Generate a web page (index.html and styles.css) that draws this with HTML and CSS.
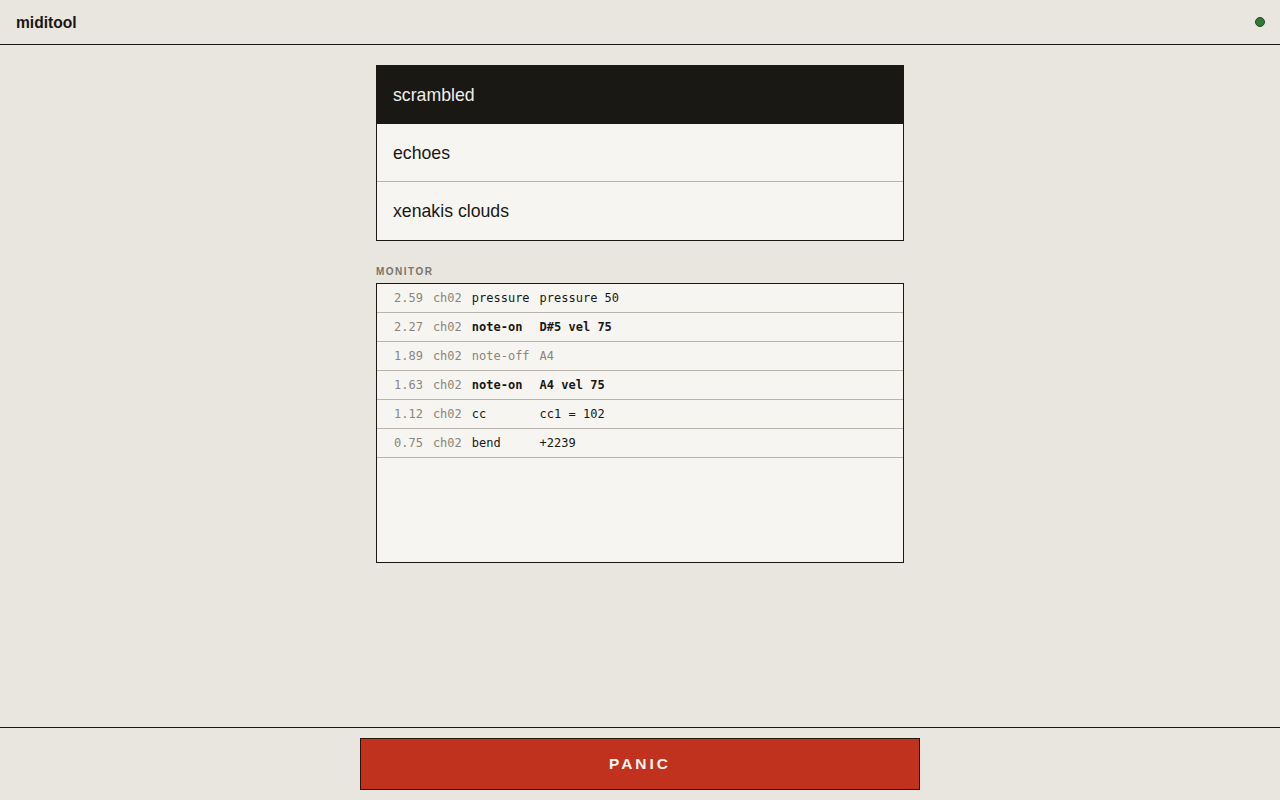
FILE: index.html
```html
<!DOCTYPE html>
<html lang="en">
<head>
    <meta charset="UTF-8">
    <meta name="viewport" content="width=device-width, initial-scale=1.0">
    <title>miditool</title>
    <link rel="stylesheet" href="styles.css">
</head>
<body>
    <header class="topbar">
        <span class="brand">miditool</span>
        <span class="status-dot" title="connected"></span>
    </header>

    <main class="main">
        <div class="panel">
            <ul class="patches">
                <li class="patch active">scrambled</li>
                <li class="patch">echoes</li>
                <li class="patch">xenakis clouds</li>
            </ul>

            <div class="section-label">MONITOR</div>
            <div class="monitor">
                <div class="event">
                    <span class="t">2.59</span><span class="ch">ch02</span><span class="kind">pressure</span><span class="data">pressure 50</span>
                </div>
                <div class="event strong">
                    <span class="t">2.27</span><span class="ch">ch02</span><span class="kind">note-on</span><span class="data">D#5 vel 75</span>
                </div>
                <div class="event muted">
                    <span class="t">1.89</span><span class="ch">ch02</span><span class="kind">note-off</span><span class="data">A4</span>
                </div>
                <div class="event strong">
                    <span class="t">1.63</span><span class="ch">ch02</span><span class="kind">note-on</span><span class="data">A4 vel 75</span>
                </div>
                <div class="event">
                    <span class="t">1.12</span><span class="ch">ch02</span><span class="kind">cc</span><span class="data">cc1 = 102</span>
                </div>
                <div class="event">
                    <span class="t">0.75</span><span class="ch">ch02</span><span class="kind">bend</span><span class="data">+2239</span>
                </div>
            </div>
        </div>
    </main>

    <footer class="bottombar">
        <button class="panic-btn">PANIC</button>
    </footer>
</body>
</html>
```

FILE: styles.css
```css
* {
    box-sizing: border-box;
}

html, body {
    height: 100%;
}

body {
    margin: 0;
    font-family: 'Liberation Sans', Arial, sans-serif;
    background: #e9e6e0;
    color: #1a1814;
    display: flex;
    flex-direction: column;
}

.topbar {
    height: 45px;
    padding: 0 16px;
    border-bottom: 1px solid #1a1814;
    display: flex;
    align-items: center;
    justify-content: space-between;
    flex-shrink: 0;
}

.brand {
    font-size: 15.6px;
    font-weight: 700;
    padding-top: 1px;
}

.status-dot {
    width: 10px;
    height: 10px;
    border-radius: 50%;
    background: #2f7a36;
    border: 1px solid #1c4a20;
    margin-right: -1px;
}

.main {
    flex: 1;
    display: flex;
    justify-content: center;
    padding-top: 20px;
}

.panel {
    width: 528px;
}

.patches {
    list-style: none;
    margin: 0;
    padding: 0;
    border: 1px solid #1a1814;
    background: #f6f5f1;
}

.patch {
    height: 58px;
    padding: 1px 16px 0;
    display: flex;
    align-items: center;
    font-size: 17.7px;
    border-bottom: 1px solid #b8b4ad;
}

.patch:last-child {
    border-bottom: none;
}

.patch.active {
    background: #1a1814;
    border-bottom-color: #1a1814;
    color: #f1eee8;
}

.section-label {
    margin: 25px 0 6px;
    font-size: 10px;
    font-weight: 700;
    letter-spacing: 1.5px;
    color: #79746c;
}

.monitor {
    height: 280px;
    border: 1px solid #1a1814;
    background: #f6f5f1;
    font-family: 'DejaVu Sans Mono', monospace;
    font-size: 12px;
}

.event {
    height: 29px;
    padding: 0 17px;
    display: grid;
    grid-template-columns: 4ch 4ch 8ch 1fr;
    column-gap: 10px;
    align-items: center;
    border-bottom: 1px solid #b8b4ad;
}

.event .t {
    text-align: right;
    color: #8a857d;
}

.event .ch {
    color: #8a857d;
}

.event.strong .kind,
.event.strong .data {
    font-weight: 700;
}

.event.muted .kind,
.event.muted .data {
    color: #8a857d;
}

.bottombar {
    height: 73px;
    border-top: 1px solid #1a1814;
    display: flex;
    justify-content: center;
    padding-top: 10px;
    flex-shrink: 0;
}

.panic-btn {
    width: 560px;
    height: 52px;
    background: #c0321d;
    border: 1px solid #2a1510;
    color: #fbf4ef;
    font-family: 'Liberation Sans', Arial, sans-serif;
    font-size: 15.5px;
    font-weight: 700;
    letter-spacing: 3px;
    padding: 0;
    cursor: pointer;
}
```
